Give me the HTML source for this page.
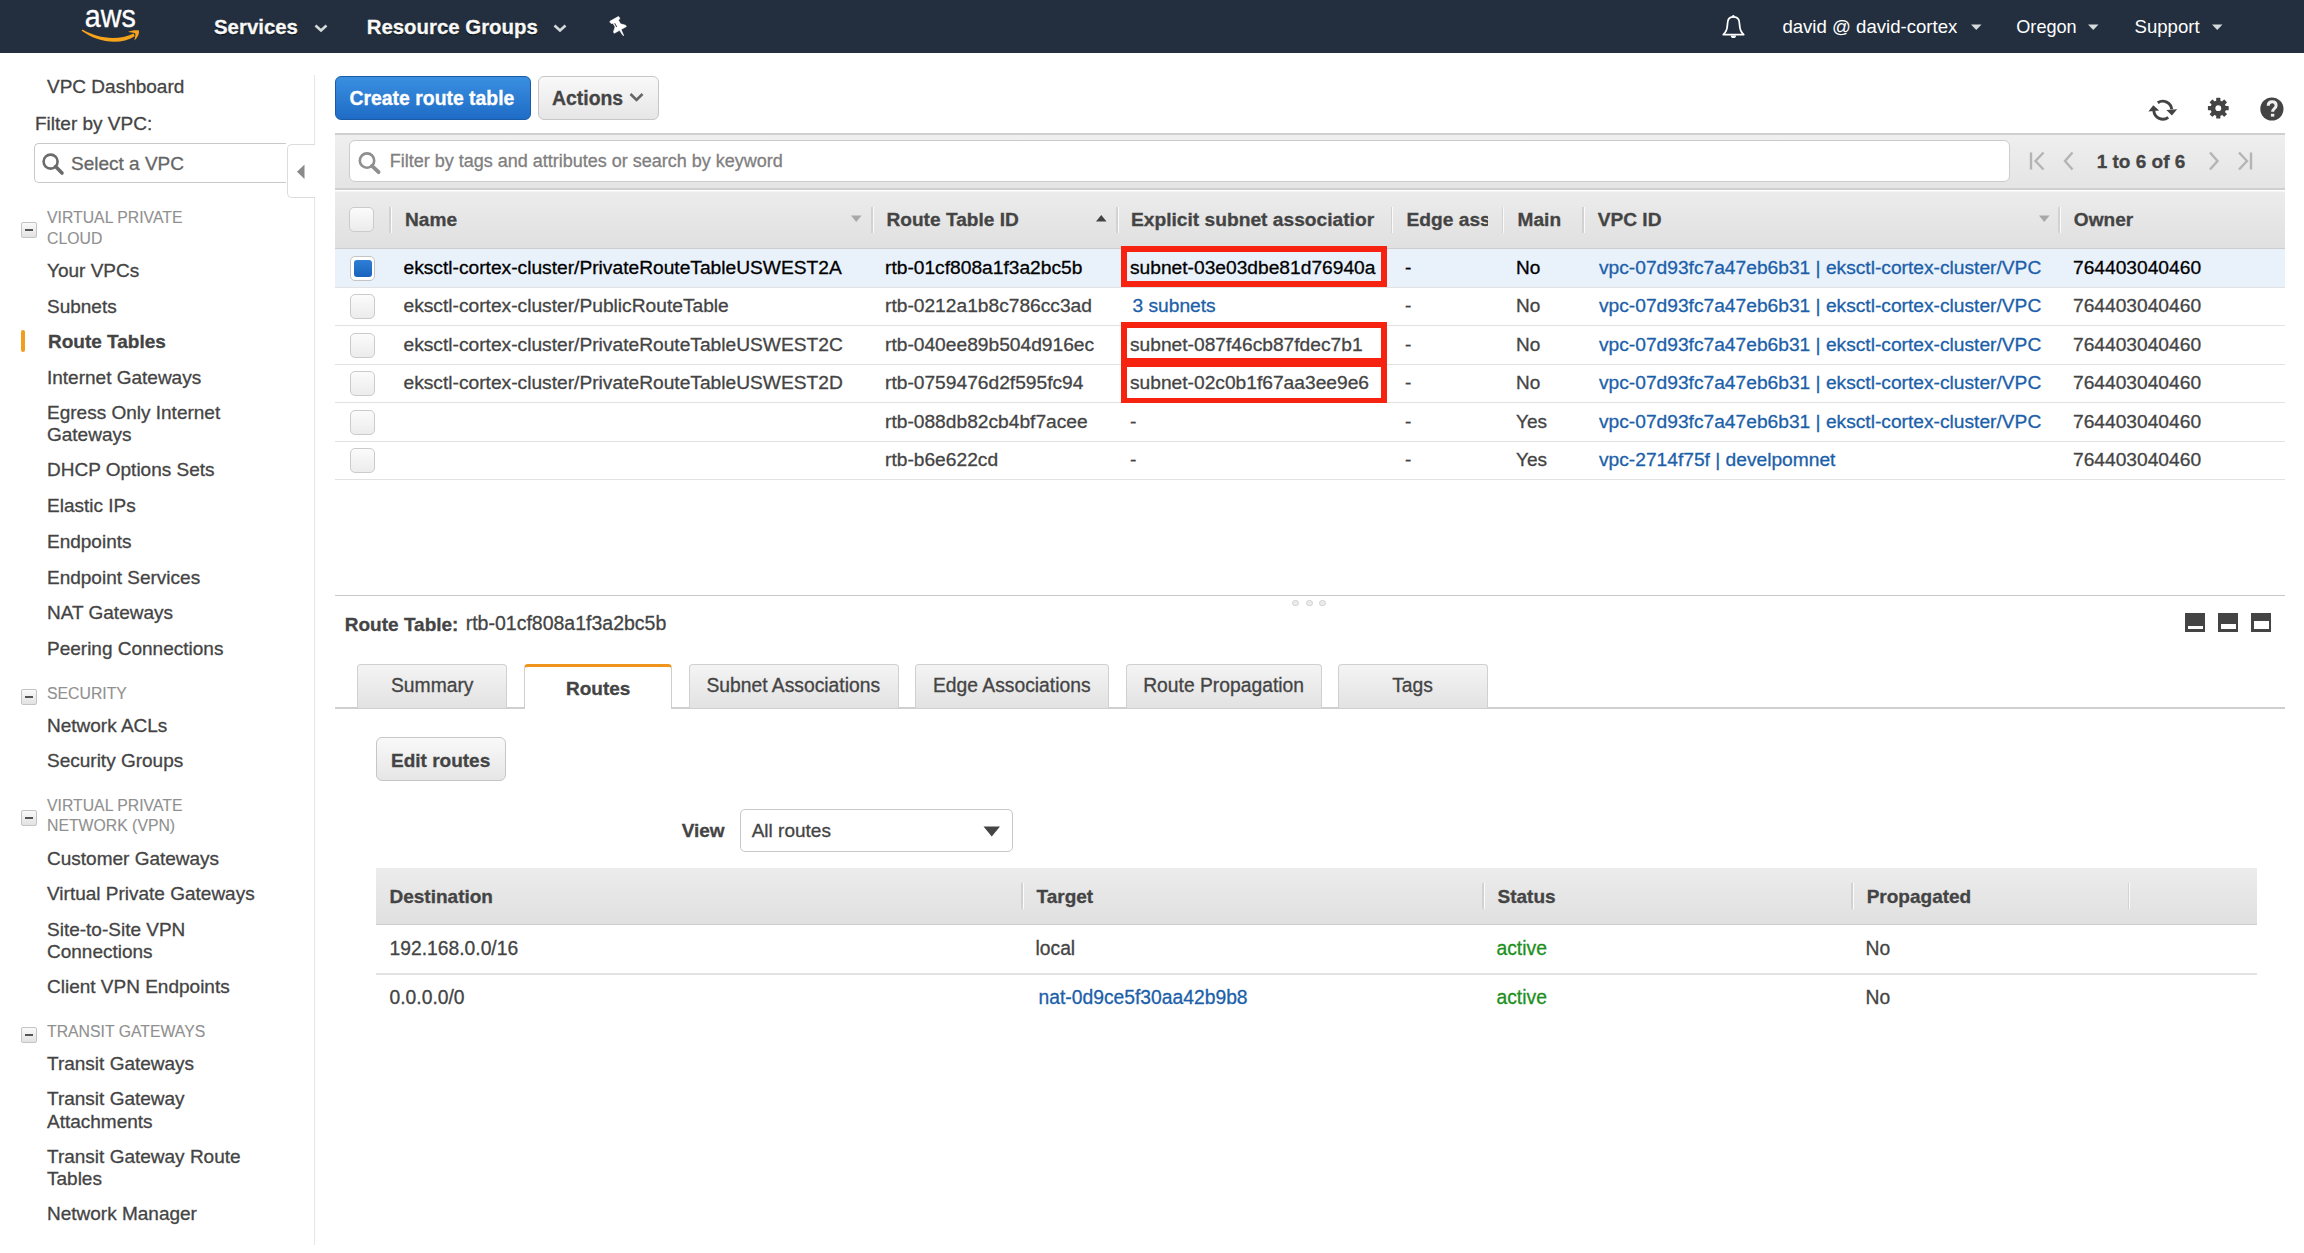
<!DOCTYPE html>
<html><head><meta charset="utf-8"><title>Route Tables | VPC Management Console</title>
<style>
html,body{margin:0;padding:0;}
body{width:2304px;height:1253px;overflow:hidden;position:relative;background:#fff;font-family:'Liberation Sans', sans-serif;}
.a{position:absolute;}
.t{position:absolute;white-space:nowrap;-webkit-text-stroke:0.3px currentColor;}
</style></head><body>
<div class="a" style="left:0px;top:0px;width:2304px;height:53px;background:#232f3e;"></div>
<svg class="a" style="left:75px;top:0px" width="75" height="53" viewBox="75 0 75 53">
<text x="84.8" y="26.6" font-family="Liberation Sans" font-size="31" fill="#fff" stroke="#fff" stroke-width="0.35" textLength="51" lengthAdjust="spacingAndGlyphs">aws</text>
<path d="M81.6,30.8 C96,41.5 119,46.5 134.8,36.2 L133.6,33.4 C118,41 98,38.8 82.6,29.6 Z" fill="#f7a21b"/>
<path d="M128,31.8 C132,30.2 136.2,29.8 139,30.6 C139.4,34 137.6,38 134.4,40.6 C135,37.5 135.6,35.4 135.3,33.4 C133,32.6 130.5,32.4 128,31.8 Z" fill="#f7a21b"/>
</svg>
<div class="t" style="left:214px;top:17.23px;font-size:20.4px;line-height:20.4px;font-weight:bold;color:#f8f8f8;text-shadow:0 1px 1px #000;">Services</div>
<svg class="a" style="left:313.5px;top:22.8px" width="14" height="10" viewBox="0 0 14 10"><path d="M1.5,2.5 L7,7.5 L12.5,2.5" stroke="#d5dbdb" stroke-width="2.6" fill="none"/></svg>
<div class="t" style="left:366.7px;top:17.23px;font-size:20.4px;line-height:20.4px;font-weight:bold;color:#f8f8f8;text-shadow:0 1px 1px #000;">Resource Groups</div>
<svg class="a" style="left:552.5px;top:22.8px" width="14" height="10" viewBox="0 0 14 10"><path d="M1.5,2.5 L7,7.5 L12.5,2.5" stroke="#d5dbdb" stroke-width="2.6" fill="none"/></svg>
<svg class="a" style="left:604px;top:12px" width="28" height="28" viewBox="-14 -14 28 28">
<g transform="translate(2,3.4) rotate(-29)">
<path d="M-4.9,-12 L4.9,-12 Q5.6,-10.6 4.9,-9.4 L3.1,-8.8 L3.1,-4.6 L6.9,-0.9 L6.9,0.6 L0.9,0.6 L0.25,7 L-0.25,7 L-0.9,0.6 L-6.9,0.6 L-6.9,-0.9 L-3.1,-4.6 L-3.1,-8.8 L-4.9,-9.4 Q-5.6,-10.6 -4.9,-12 Z" fill="#fff" stroke="#fff" stroke-width="0.6" stroke-linejoin="round"/>
<path d="M-1.7,-8 L-1.7,-3.6" stroke="#3a3f48" stroke-width="0.9"/>
</g></svg>
<svg class="a" style="left:1715px;top:11.4px" width="40" height="32" viewBox="0 0 40 32">
<path d="M18.3,5.8 C13,5.8 12.6,10 12.4,14 C12.2,19 11.3,21 8.3,23.6 L28.7,23.6 C25.7,21 24.8,19 24.6,14 C24.4,10 24,5.8 18.3,5.8 Z" fill="none" stroke="#fff" stroke-width="1.8" stroke-linejoin="round"/>
<path d="M15.8,24.5 A2.6,2.6 0 0 0 21,24.5 Z" fill="#fff"/>
<circle cx="18.3" cy="5.3" r="1.2" fill="#fff"/>
</svg>
<div class="t" style="left:1782.4px;top:17.86px;font-size:18.6px;line-height:18.6px;font-weight:normal;color:#fff;-webkit-text-stroke:0;">david @ david-cortex</div>
<svg class="a" style="left:1970.5px;top:24px" width="11" height="7" viewBox="0 0 11 7"><path d="M0,0.5 L10.5,0.5 L5.25,6 Z" fill="#d5dbdb"/></svg>
<div class="t" style="left:2016.3px;top:18.28px;font-size:18.1px;line-height:18.1px;font-weight:normal;color:#fff;-webkit-text-stroke:0;">Oregon</div>
<svg class="a" style="left:2088px;top:24px" width="11" height="7" viewBox="0 0 11 7"><path d="M0,0.5 L10.5,0.5 L5.25,6 Z" fill="#d5dbdb"/></svg>
<div class="t" style="left:2134.5px;top:17.86px;font-size:18.6px;line-height:18.6px;font-weight:normal;color:#fff;-webkit-text-stroke:0;">Support</div>
<svg class="a" style="left:2211.5px;top:24px" width="11" height="7" viewBox="0 0 11 7"><path d="M0,0.5 L10.5,0.5 L5.25,6 Z" fill="#d5dbdb"/></svg>
<div class="a" style="left:314px;top:75px;width:1px;height:1170px;background:#e6e6e6;"></div>
<div class="t" style="left:47px;top:76.92px;font-size:19px;line-height:19px;font-weight:normal;color:#444;">VPC Dashboard</div>
<div class="t" style="left:35px;top:113.92px;font-size:19px;line-height:19px;font-weight:normal;color:#444;">Filter by VPC:</div>
<div class="a" style="left:34px;top:143px;width:252px;height:40px;box-sizing:border-box;border:1px solid #c8c8c8;border-right:none;border-radius:5px 0 0 5px;background:#fff;"></div>
<svg class="a" style="left:40px;top:151px" width="26" height="26" viewBox="0 0 26 26"><circle cx="10.6" cy="10.6" r="7" fill="none" stroke="#6b6b6b" stroke-width="2.6"/><path d="M15.6,15.6 L22,22" stroke="#6b6b6b" stroke-width="3.6" stroke-linecap="round"/></svg>
<div class="t" style="left:71px;top:153.92px;font-size:19px;line-height:19px;font-weight:normal;color:#666;">Select a VPC</div>
<div class="a" style="left:287px;top:144px;width:28px;height:54px;box-sizing:border-box;border:1px solid #dcdcdc;border-right:none;border-radius:5px 0 0 5px;background:#fff;"></div>
<svg class="a" style="left:296px;top:164px" width="10" height="16" viewBox="0 0 10 16"><path d="M8.5,0.5 L8.5,15 L1,7.75 Z" fill="#8a8a8a"/></svg>
<div class="t" style="left:47px;top:209.63px;font-size:15.8px;line-height:15.8px;font-weight:normal;color:#909090;-webkit-text-stroke:0.12px currentColor;">VIRTUAL PRIVATE</div>
<div class="t" style="left:47px;top:230.93px;font-size:15.8px;line-height:15.8px;font-weight:normal;color:#909090;-webkit-text-stroke:0.12px currentColor;">CLOUD</div>
<div class="a" style="left:21px;top:222px;width:16px;height:16px;box-sizing:border-box;border:1px solid #c4c4c4;border-radius:2px;background:linear-gradient(#fafafa,#e2e2e2);"></div>
<div class="a" style="left:25px;top:229px;width:8px;height:2.2px;background:#555;"></div>
<div class="t" style="left:47px;top:261.42px;font-size:19px;line-height:19px;font-weight:normal;color:#444;">Your VPCs</div>
<div class="t" style="left:47px;top:296.92px;font-size:19px;line-height:19px;font-weight:normal;color:#444;">Subnets</div>
<div class="t" style="left:47px;top:367.82px;font-size:19px;line-height:19px;font-weight:normal;color:#444;">Internet Gateways</div>
<div class="t" style="left:47px;top:403.22px;font-size:19px;line-height:19px;font-weight:normal;color:#444;">Egress Only Internet</div>
<div class="t" style="left:47px;top:424.72px;font-size:19px;line-height:19px;font-weight:normal;color:#444;">Gateways</div>
<div class="t" style="left:47px;top:460.42px;font-size:19px;line-height:19px;font-weight:normal;color:#444;">DHCP Options Sets</div>
<div class="t" style="left:47px;top:496.12px;font-size:19px;line-height:19px;font-weight:normal;color:#444;">Elastic IPs</div>
<div class="t" style="left:47px;top:531.92px;font-size:19px;line-height:19px;font-weight:normal;color:#444;">Endpoints</div>
<div class="t" style="left:47px;top:567.52px;font-size:19px;line-height:19px;font-weight:normal;color:#444;">Endpoint Services</div>
<div class="t" style="left:47px;top:603.12px;font-size:19px;line-height:19px;font-weight:normal;color:#444;">NAT Gateways</div>
<div class="t" style="left:47px;top:638.52px;font-size:19px;line-height:19px;font-weight:normal;color:#444;">Peering Connections</div>
<div class="t" style="left:47px;top:715.82px;font-size:19px;line-height:19px;font-weight:normal;color:#444;">Network ACLs</div>
<div class="t" style="left:47px;top:751.32px;font-size:19px;line-height:19px;font-weight:normal;color:#444;">Security Groups</div>
<div class="t" style="left:47px;top:848.82px;font-size:19px;line-height:19px;font-weight:normal;color:#444;">Customer Gateways</div>
<div class="t" style="left:47px;top:884.32px;font-size:19px;line-height:19px;font-weight:normal;color:#444;">Virtual Private Gateways</div>
<div class="t" style="left:47px;top:919.92px;font-size:19px;line-height:19px;font-weight:normal;color:#444;">Site-to-Site VPN</div>
<div class="t" style="left:47px;top:941.52px;font-size:19px;line-height:19px;font-weight:normal;color:#444;">Connections</div>
<div class="t" style="left:47px;top:977.32px;font-size:19px;line-height:19px;font-weight:normal;color:#444;">Client VPN Endpoints</div>
<div class="t" style="left:47px;top:1053.62px;font-size:19px;line-height:19px;font-weight:normal;color:#444;">Transit Gateways</div>
<div class="t" style="left:47px;top:1088.92px;font-size:19px;line-height:19px;font-weight:normal;color:#444;">Transit Gateway</div>
<div class="t" style="left:47px;top:1111.52px;font-size:19px;line-height:19px;font-weight:normal;color:#444;">Attachments</div>
<div class="t" style="left:47px;top:1147.02px;font-size:19px;line-height:19px;font-weight:normal;color:#444;">Transit Gateway Route</div>
<div class="t" style="left:47px;top:1168.62px;font-size:19px;line-height:19px;font-weight:normal;color:#444;">Tables</div>
<div class="t" style="left:47px;top:1204.42px;font-size:19px;line-height:19px;font-weight:normal;color:#444;">Network Manager</div>
<div class="t" style="left:48px;top:332.42px;font-size:19px;line-height:19px;font-weight:bold;color:#444;">Route Tables</div>
<div class="a" style="left:21px;top:330px;width:4px;height:22px;background:#f19e1f;border-radius:2px;"></div>
<div class="t" style="left:47px;top:685.63px;font-size:15.8px;line-height:15.8px;font-weight:normal;color:#909090;-webkit-text-stroke:0.12px currentColor;">SECURITY</div>
<div class="a" style="left:21px;top:688.5px;width:16px;height:16px;box-sizing:border-box;border:1px solid #c4c4c4;border-radius:2px;background:linear-gradient(#fafafa,#e2e2e2);"></div>
<div class="a" style="left:25px;top:695.5px;width:8px;height:2.2px;background:#555;"></div>
<div class="t" style="left:47px;top:798.33px;font-size:15.8px;line-height:15.8px;font-weight:normal;color:#909090;-webkit-text-stroke:0.12px currentColor;">VIRTUAL PRIVATE</div>
<div class="t" style="left:47px;top:817.83px;font-size:15.8px;line-height:15.8px;font-weight:normal;color:#909090;-webkit-text-stroke:0.12px currentColor;">NETWORK (VPN)</div>
<div class="a" style="left:21px;top:810px;width:16px;height:16px;box-sizing:border-box;border:1px solid #c4c4c4;border-radius:2px;background:linear-gradient(#fafafa,#e2e2e2);"></div>
<div class="a" style="left:25px;top:817px;width:8px;height:2.2px;background:#555;"></div>
<div class="t" style="left:47px;top:1024.03px;font-size:15.8px;line-height:15.8px;font-weight:normal;color:#909090;-webkit-text-stroke:0.12px currentColor;">TRANSIT GATEWAYS</div>
<div class="a" style="left:21px;top:1027px;width:16px;height:16px;box-sizing:border-box;border:1px solid #c4c4c4;border-radius:2px;background:linear-gradient(#fafafa,#e2e2e2);"></div>
<div class="a" style="left:25px;top:1034px;width:8px;height:2.2px;background:#555;"></div>
<div class="a" style="left:335px;top:76px;width:196px;height:44px;box-sizing:border-box;border:1px solid #1a5ba6;border-radius:6px;background:linear-gradient(#3a8fe0,#1f6cc6);"></div>
<div class="t" style="left:349.5px;top:89.08px;font-size:19.4px;line-height:19.4px;font-weight:bold;color:#fff;">Create route table</div>
<div class="a" style="left:538px;top:76px;width:121px;height:44px;box-sizing:border-box;border:1px solid #c6c6c6;border-radius:6px;background:linear-gradient(#f9f9f9,#e6e6e6);"></div>
<div class="t" style="left:552px;top:89.08px;font-size:19.4px;line-height:19.4px;font-weight:bold;color:#444;">Actions</div>
<svg class="a" style="left:629px;top:92px" width="15" height="11" viewBox="0 0 15 11"><path d="M1.5,2 L7.5,8 L13.5,2" stroke="#666" stroke-width="2.6" fill="none"/></svg>
<svg class="a" style="left:2140px;top:90px" width="40" height="40" viewBox="0 0 40 40">
<path d="M17.77,12.74 A9,9 0 0 1 31.77,19.4" fill="none" stroke="#444" stroke-width="2.9"/>
<path d="M26.4,19.9 L37.2,19.3 L31.9,25.6 Z" fill="#444"/>
<path d="M28.22,27.39 A9,9 0 0 1 13.83,20.98" fill="none" stroke="#444" stroke-width="2.9"/>
<path d="M8.4,21.4 L19.2,20.6 L13.3,15.2 Z" fill="#444"/>
</svg>
<svg class="a" style="left:2205px;top:95px" width="26" height="26" viewBox="-13 -13 26 26">
<g fill="#444" transform="translate(0.3,0.2)">
<rect x="-2.1" y="-10.4" width="4.2" height="20.8" rx="0.6"/>
<rect x="-2.1" y="-10.4" width="4.2" height="20.8" rx="0.6" transform="rotate(45)"/>
<rect x="-2.1" y="-10.4" width="4.2" height="20.8" rx="0.6" transform="rotate(90)"/>
<rect x="-2.1" y="-10.4" width="4.2" height="20.8" rx="0.6" transform="rotate(135)"/>
<circle r="7.8"/></g><circle cx="0.3" cy="0.2" r="2.9" fill="#fff"/>
</svg>
<svg class="a" style="left:2259px;top:96px" width="26" height="26" viewBox="0 0 26 26">
<circle cx="12.9" cy="13" r="11.6" fill="#444"/>
<path d="M9.2,9.8 C9.2,7 10.9,5.8 13.1,5.8 C15.5,5.8 17.1,7.2 17.1,9.4 C17.1,12.4 13.6,12.6 13.6,15.8" fill="none" stroke="#f0f0f0" stroke-width="3"/>
<rect x="11.9" y="17.8" width="3.4" height="2.8" fill="#f0f0f0"/>
</svg>
<div class="a" style="left:335px;top:133px;width:1950px;height:57px;box-sizing:border-box;border-top:2px solid #cfcfcf;border-bottom:2px solid #cfcfcf;background:linear-gradient(#efefef,#e4e4e4);"></div>
<div class="a" style="left:349px;top:140px;width:1661px;height:42px;box-sizing:border-box;border:1px solid #cccccc;border-radius:6px;background:#fff;"></div>
<svg class="a" style="left:355px;top:149px" width="28" height="27" viewBox="0 0 28 27"><circle cx="12" cy="11.6" r="7.2" fill="none" stroke="#8f8f8f" stroke-width="2.6"/><path d="M17,16.8 L23.6,23.2" stroke="#8f8f8f" stroke-width="3.8" stroke-linecap="round"/></svg>
<div class="t" style="left:389.7px;top:151.76px;font-size:18px;line-height:18px;font-weight:normal;color:#808080;">Filter by tags and attributes or search by keyword</div>
<svg class="a" style="left:2026px;top:150px" width="232" height="22" viewBox="0 0 232 22">
<path d="M5,2.5 L5,19.5" stroke="#b4b4b4" stroke-width="2.4"/>
<path d="M17.5,2.5 L9.5,11 L17.5,19.5" stroke="#b4b4b4" stroke-width="2.4" fill="none"/>
<path d="M46.5,2.5 L39,11 L46.5,19.5" stroke="#b4b4b4" stroke-width="2.4" fill="none"/>
<path d="M184,2.5 L191.5,11 L184,19.5" stroke="#b4b4b4" stroke-width="2.4" fill="none"/>
<path d="M213,2.5 L221,11 L213,19.5" stroke="#b4b4b4" stroke-width="2.4" fill="none"/>
<path d="M225,2.5 L225,19.5" stroke="#b4b4b4" stroke-width="2.4"/>
</svg>
<div class="t" style="left:2096.7px;top:152.32px;font-size:19px;line-height:19px;font-weight:bold;color:#444;">1 to 6 of 6</div>
<div class="a" style="left:335px;top:191px;width:1950px;height:58px;box-sizing:border-box;border-top:1px solid #f5f5f5;border-bottom:1px solid #cdcdcd;background:linear-gradient(#ececec,#e0e0e0);"></div>
<div class="a" style="left:349px;top:207px;width:25px;height:25px;box-sizing:border-box;border:1px solid #cbcbcb;border-radius:5px;background:linear-gradient(#fbfbfb,#ececec);"></div>
<div class="a" style="left:389px;top:207px;width:1.5px;height:26px;background:#d2d2d2;box-shadow:1px 0 0 #fbfbfb;"></div>
<div class="a" style="left:871px;top:207px;width:1.5px;height:26px;background:#d2d2d2;box-shadow:1px 0 0 #fbfbfb;"></div>
<div class="a" style="left:1116px;top:207px;width:1.5px;height:26px;background:#d2d2d2;box-shadow:1px 0 0 #fbfbfb;"></div>
<div class="a" style="left:1390.5px;top:207px;width:1.5px;height:26px;background:#d2d2d2;box-shadow:1px 0 0 #fbfbfb;"></div>
<div class="a" style="left:1501.5px;top:207px;width:1.5px;height:26px;background:#d2d2d2;box-shadow:1px 0 0 #fbfbfb;"></div>
<div class="a" style="left:1582px;top:207px;width:1.5px;height:26px;background:#d2d2d2;box-shadow:1px 0 0 #fbfbfb;"></div>
<div class="a" style="left:2058px;top:207px;width:1.5px;height:26px;background:#d2d2d2;box-shadow:1px 0 0 #fbfbfb;"></div>
<div class="t" style="left:405px;top:210.23px;font-size:19.1px;line-height:19.1px;font-weight:bold;color:#444;">Name</div>
<div class="t" style="left:886.5px;top:210.23px;font-size:19.1px;line-height:19.1px;font-weight:bold;color:#444;">Route Table ID</div>
<div class="a" style="left:1131px;top:200px;width:246px;height:40px;overflow:hidden;"><div class="t" style="left:0px;top:10.15px;font-size:19.2px;line-height:19.2px;font-weight:bold;color:#444;">Explicit subnet associatior</div>
</div>
<div class="a" style="left:1406.5px;top:200px;width:81.5px;height:40px;overflow:hidden;"><div class="t" style="left:0px;top:10.15px;font-size:19.2px;line-height:19.2px;font-weight:bold;color:#444;">Edge ass</div>
</div>
<div class="t" style="left:1517.6px;top:210.23px;font-size:19.1px;line-height:19.1px;font-weight:bold;color:#444;">Main</div>
<div class="t" style="left:1597.8px;top:210.23px;font-size:19.1px;line-height:19.1px;font-weight:bold;color:#444;">VPC ID</div>
<div class="t" style="left:2073.8px;top:210.23px;font-size:19.1px;line-height:19.1px;font-weight:bold;color:#444;">Owner</div>
<svg class="a" style="left:851px;top:215px" width="11" height="8" viewBox="0 0 11 8"><path d="M0,0.5 L10.5,0.5 L5.25,7 Z" fill="#a8a8a8"/></svg>
<svg class="a" style="left:2038.5px;top:215px" width="11" height="8" viewBox="0 0 11 8"><path d="M0,0.5 L10.5,0.5 L5.25,7 Z" fill="#a8a8a8"/></svg>
<svg class="a" style="left:1096px;top:214px" width="11" height="8" viewBox="0 0 11 8"><path d="M0,7.5 L10.5,7.5 L5.25,1 Z" fill="#444"/></svg>
<div class="a" style="left:335px;top:249.0px;width:1950px;height:38.5px;box-sizing:border-box;border-bottom:1.5px solid #e2e2e2;background:#e9f1fb;"></div>
<div class="a" style="left:350px;top:255.5px;width:25px;height:25px;box-sizing:border-box;border:1px solid #c4c4c4;border-radius:5px;background:#fff;"></div>
<div class="a" style="left:354px;top:259.5px;width:17.5px;height:17.5px;border-radius:3px;background:linear-gradient(#2f7fd6,#1863bd);"></div>
<div class="t" style="left:403.5px;top:257.75px;font-size:19.2px;line-height:19.2px;font-weight:normal;color:#000;">eksctl-cortex-cluster/PrivateRouteTableUSWEST2A</div>
<div class="t" style="left:885px;top:257.75px;font-size:19.2px;line-height:19.2px;font-weight:normal;color:#000;">rtb-01cf808a1f3a2bc5b</div>
<div class="t" style="left:1130px;top:257.75px;font-size:19.2px;line-height:19.2px;font-weight:normal;color:#000;">subnet-03e03dbe81d76940a</div>
<div class="t" style="left:1405px;top:257.92px;font-size:19px;line-height:19px;font-weight:normal;color:#000;">-</div>
<div class="t" style="left:1516px;top:257.92px;font-size:19px;line-height:19px;font-weight:normal;color:#000;">No</div>
<div class="t" style="left:1599px;top:257.75px;font-size:19.2px;line-height:19.2px;font-weight:normal;color:#1c5fa9;">vpc-07d93fc7a47eb6b31 | eksctl-cortex-cluster/VPC</div>
<div class="t" style="left:2073px;top:257.75px;font-size:19.2px;line-height:19.2px;font-weight:normal;color:#000;">764403040460</div>
<div class="a" style="left:335px;top:287.5px;width:1950px;height:38.5px;box-sizing:border-box;border-bottom:1.5px solid #e2e2e2;background:#fff;"></div>
<div class="a" style="left:350px;top:294.0px;width:25px;height:25px;box-sizing:border-box;border:1px solid #cbcbcb;border-radius:5px;background:linear-gradient(#fbfbfb,#ececec);"></div>
<div class="t" style="left:403.5px;top:296.25px;font-size:19.2px;line-height:19.2px;font-weight:normal;color:#444;">eksctl-cortex-cluster/PublicRouteTable</div>
<div class="t" style="left:885px;top:296.25px;font-size:19.2px;line-height:19.2px;font-weight:normal;color:#444;">rtb-0212a1b8c786cc3ad</div>
<div class="t" style="left:1132.5px;top:296.25px;font-size:19.2px;line-height:19.2px;font-weight:normal;color:#1c5fa9;">3 subnets</div>
<div class="t" style="left:1405px;top:296.42px;font-size:19px;line-height:19px;font-weight:normal;color:#444;">-</div>
<div class="t" style="left:1516px;top:296.42px;font-size:19px;line-height:19px;font-weight:normal;color:#444;">No</div>
<div class="t" style="left:1599px;top:296.25px;font-size:19.2px;line-height:19.2px;font-weight:normal;color:#1c5fa9;">vpc-07d93fc7a47eb6b31 | eksctl-cortex-cluster/VPC</div>
<div class="t" style="left:2073px;top:296.25px;font-size:19.2px;line-height:19.2px;font-weight:normal;color:#444;">764403040460</div>
<div class="a" style="left:335px;top:326.0px;width:1950px;height:38.5px;box-sizing:border-box;border-bottom:1.5px solid #e2e2e2;background:#fff;"></div>
<div class="a" style="left:350px;top:332.5px;width:25px;height:25px;box-sizing:border-box;border:1px solid #cbcbcb;border-radius:5px;background:linear-gradient(#fbfbfb,#ececec);"></div>
<div class="t" style="left:403.5px;top:334.75px;font-size:19.2px;line-height:19.2px;font-weight:normal;color:#444;">eksctl-cortex-cluster/PrivateRouteTableUSWEST2C</div>
<div class="t" style="left:885px;top:334.75px;font-size:19.2px;line-height:19.2px;font-weight:normal;color:#444;">rtb-040ee89b504d916ec</div>
<div class="t" style="left:1130px;top:334.75px;font-size:19.2px;line-height:19.2px;font-weight:normal;color:#444;">subnet-087f46cb87fdec7b1</div>
<div class="t" style="left:1405px;top:334.92px;font-size:19px;line-height:19px;font-weight:normal;color:#444;">-</div>
<div class="t" style="left:1516px;top:334.92px;font-size:19px;line-height:19px;font-weight:normal;color:#444;">No</div>
<div class="t" style="left:1599px;top:334.75px;font-size:19.2px;line-height:19.2px;font-weight:normal;color:#1c5fa9;">vpc-07d93fc7a47eb6b31 | eksctl-cortex-cluster/VPC</div>
<div class="t" style="left:2073px;top:334.75px;font-size:19.2px;line-height:19.2px;font-weight:normal;color:#444;">764403040460</div>
<div class="a" style="left:335px;top:364.5px;width:1950px;height:38.5px;box-sizing:border-box;border-bottom:1.5px solid #e2e2e2;background:#fff;"></div>
<div class="a" style="left:350px;top:371.0px;width:25px;height:25px;box-sizing:border-box;border:1px solid #cbcbcb;border-radius:5px;background:linear-gradient(#fbfbfb,#ececec);"></div>
<div class="t" style="left:403.5px;top:373.25px;font-size:19.2px;line-height:19.2px;font-weight:normal;color:#444;">eksctl-cortex-cluster/PrivateRouteTableUSWEST2D</div>
<div class="t" style="left:885px;top:373.25px;font-size:19.2px;line-height:19.2px;font-weight:normal;color:#444;">rtb-0759476d2f595fc94</div>
<div class="t" style="left:1130px;top:373.25px;font-size:19.2px;line-height:19.2px;font-weight:normal;color:#444;">subnet-02c0b1f67aa3ee9e6</div>
<div class="t" style="left:1405px;top:373.42px;font-size:19px;line-height:19px;font-weight:normal;color:#444;">-</div>
<div class="t" style="left:1516px;top:373.42px;font-size:19px;line-height:19px;font-weight:normal;color:#444;">No</div>
<div class="t" style="left:1599px;top:373.25px;font-size:19.2px;line-height:19.2px;font-weight:normal;color:#1c5fa9;">vpc-07d93fc7a47eb6b31 | eksctl-cortex-cluster/VPC</div>
<div class="t" style="left:2073px;top:373.25px;font-size:19.2px;line-height:19.2px;font-weight:normal;color:#444;">764403040460</div>
<div class="a" style="left:335px;top:403.0px;width:1950px;height:38.5px;box-sizing:border-box;border-bottom:1.5px solid #e2e2e2;background:#fff;"></div>
<div class="a" style="left:350px;top:409.5px;width:25px;height:25px;box-sizing:border-box;border:1px solid #cbcbcb;border-radius:5px;background:linear-gradient(#fbfbfb,#ececec);"></div>
<div class="t" style="left:885px;top:411.75px;font-size:19.2px;line-height:19.2px;font-weight:normal;color:#444;">rtb-088db82cb4bf7acee</div>
<div class="t" style="left:1130px;top:411.75px;font-size:19.2px;line-height:19.2px;font-weight:normal;color:#444;">-</div>
<div class="t" style="left:1405px;top:411.92px;font-size:19px;line-height:19px;font-weight:normal;color:#444;">-</div>
<div class="t" style="left:1516px;top:411.92px;font-size:19px;line-height:19px;font-weight:normal;color:#444;">Yes</div>
<div class="t" style="left:1599px;top:411.75px;font-size:19.2px;line-height:19.2px;font-weight:normal;color:#1c5fa9;">vpc-07d93fc7a47eb6b31 | eksctl-cortex-cluster/VPC</div>
<div class="t" style="left:2073px;top:411.75px;font-size:19.2px;line-height:19.2px;font-weight:normal;color:#444;">764403040460</div>
<div class="a" style="left:335px;top:441.5px;width:1950px;height:38.5px;box-sizing:border-box;border-bottom:1.5px solid #e2e2e2;background:#fff;"></div>
<div class="a" style="left:350px;top:448.0px;width:25px;height:25px;box-sizing:border-box;border:1px solid #cbcbcb;border-radius:5px;background:linear-gradient(#fbfbfb,#ececec);"></div>
<div class="t" style="left:885px;top:450.25px;font-size:19.2px;line-height:19.2px;font-weight:normal;color:#444;">rtb-b6e622cd</div>
<div class="t" style="left:1130px;top:450.25px;font-size:19.2px;line-height:19.2px;font-weight:normal;color:#444;">-</div>
<div class="t" style="left:1405px;top:450.42px;font-size:19px;line-height:19px;font-weight:normal;color:#444;">-</div>
<div class="t" style="left:1516px;top:450.42px;font-size:19px;line-height:19px;font-weight:normal;color:#444;">Yes</div>
<div class="t" style="left:1599px;top:450.25px;font-size:19.2px;line-height:19.2px;font-weight:normal;color:#1c5fa9;">vpc-2714f75f | develpomnet</div>
<div class="t" style="left:2073px;top:450.25px;font-size:19.2px;line-height:19.2px;font-weight:normal;color:#444;">764403040460</div>
<div class="a" style="left:1121px;top:245.5px;width:266px;height:41.5px;box-sizing:border-box;border:6.5px solid #f5230f;border-right-width:6px;border-bottom-width:6px;"></div>
<div class="a" style="left:1121px;top:322px;width:266px;height:40.5px;box-sizing:border-box;border:6px solid #f5230f;border-left-width:6.5px;border-bottom-width:5.5px;"></div>
<div class="a" style="left:1121px;top:362px;width:266px;height:41px;box-sizing:border-box;border:5.5px solid #f5230f;border-left-width:6.5px;border-right-width:6px;"></div>
<div class="a" style="left:335px;top:594.5px;width:1950px;height:1.5px;background:#c8c8c8;"></div>
<div class="a" style="left:1292px;top:600px;width:7px;height:6px;box-sizing:border-box;border:1.5px solid #d2d2d2;border-radius:3.5px 3.5px 3px 3px;background:#ececec;"></div>
<div class="a" style="left:1305.5px;top:600px;width:7px;height:6px;box-sizing:border-box;border:1.5px solid #d2d2d2;border-radius:3.5px 3.5px 3px 3px;background:#ececec;"></div>
<div class="a" style="left:1319px;top:600px;width:7px;height:6px;box-sizing:border-box;border:1.5px solid #d2d2d2;border-radius:3.5px 3.5px 3px 3px;background:#ececec;"></div>
<div class="t" style="left:344.8px;top:614.52px;font-size:19px;line-height:19px;font-weight:bold;color:#444;">Route Table:</div>
<div class="t" style="left:465.7px;top:614.09px;font-size:19.5px;line-height:19.5px;font-weight:normal;color:#444;">rtb-01cf808a1f3a2bc5b</div>
<div class="a" style="left:2185px;top:613px;width:20px;height:19px;background:#444;"></div>
<div class="a" style="left:2187.5px;top:626.2px;width:15px;height:3px;background:#fff;"></div>
<div class="a" style="left:2218px;top:613px;width:20px;height:19px;background:#444;"></div>
<div class="a" style="left:2220.5px;top:623.7px;width:15px;height:5.5px;background:#fff;"></div>
<div class="a" style="left:2251px;top:613px;width:20px;height:19px;background:#444;"></div>
<div class="a" style="left:2253.5px;top:620.7px;width:15px;height:8.5px;background:#fff;"></div>
<div class="a" style="left:335px;top:707px;width:1950px;height:1.5px;background:#cfcfcf;"></div>
<div class="a" style="left:357px;top:663.5px;width:150px;height:44.5px;box-sizing:border-box;border:1.5px solid #d0d0d0;border-bottom:none;border-radius:4px 4px 0 0;background:linear-gradient(#f4f4f4,#e2e2e2);"></div>
<div class="t" style="left:391px;top:676.06px;font-size:19.3px;line-height:19.3px;font-weight:normal;color:#444;">Summary</div>
<div class="a" style="left:523.5px;top:663.5px;width:148.5px;height:45.5px;box-sizing:border-box;border:1px solid #cfcfcf;border-bottom:none;border-top:3px solid #f0951c;border-radius:4px 4px 0 0;background:#fff;"></div>
<div class="t" style="left:566px;top:678.72px;font-size:19px;line-height:19px;font-weight:bold;color:#444;">Routes</div>
<div class="a" style="left:689px;top:663.5px;width:210px;height:44.5px;box-sizing:border-box;border:1.5px solid #d0d0d0;border-bottom:none;border-radius:4px 4px 0 0;background:linear-gradient(#f4f4f4,#e2e2e2);"></div>
<div class="t" style="left:706.4px;top:676.06px;font-size:19.3px;line-height:19.3px;font-weight:normal;color:#444;">Subnet Associations</div>
<div class="a" style="left:915px;top:663.5px;width:194px;height:44.5px;box-sizing:border-box;border:1.5px solid #d0d0d0;border-bottom:none;border-radius:4px 4px 0 0;background:linear-gradient(#f4f4f4,#e2e2e2);"></div>
<div class="t" style="left:933px;top:676.06px;font-size:19.3px;line-height:19.3px;font-weight:normal;color:#444;">Edge Associations</div>
<div class="a" style="left:1125.5px;top:663.5px;width:196.5px;height:44.5px;box-sizing:border-box;border:1.5px solid #d0d0d0;border-bottom:none;border-radius:4px 4px 0 0;background:linear-gradient(#f4f4f4,#e2e2e2);"></div>
<div class="t" style="left:1143.2px;top:676.06px;font-size:19.3px;line-height:19.3px;font-weight:normal;color:#444;">Route Propagation</div>
<div class="a" style="left:1337.5px;top:663.5px;width:150.0px;height:44.5px;box-sizing:border-box;border:1.5px solid #d0d0d0;border-bottom:none;border-radius:4px 4px 0 0;background:linear-gradient(#f4f4f4,#e2e2e2);"></div>
<div class="t" style="left:1392.2px;top:676.06px;font-size:19.3px;line-height:19.3px;font-weight:normal;color:#444;">Tags</div>
<div class="a" style="left:376px;top:737px;width:130px;height:44px;box-sizing:border-box;border:1px solid #c6c6c6;border-radius:6px;background:linear-gradient(#f9f9f9,#e6e6e6);"></div>
<div class="t" style="left:391px;top:750.52px;font-size:19px;line-height:19px;font-weight:bold;color:#444;">Edit routes</div>
<div class="t" style="left:681.7px;top:821.42px;font-size:19px;line-height:19px;font-weight:bold;color:#444;">View</div>
<div class="a" style="left:740px;top:809px;width:273px;height:43px;box-sizing:border-box;border:1.5px solid #c8c8c8;border-radius:5px;background:#fff;"></div>
<div class="t" style="left:751.7px;top:821.42px;font-size:19px;line-height:19px;font-weight:normal;color:#444;">All routes</div>
<svg class="a" style="left:983px;top:826px" width="18" height="12" viewBox="0 0 18 12"><path d="M0.5,0.5 L17,0.5 L8.75,10.5 Z" fill="#444"/></svg>
<div class="a" style="left:376px;top:868px;width:1881px;height:57px;box-sizing:border-box;border-bottom:1.5px solid #cdcdcd;background:linear-gradient(#ececec,#e0e0e0);"></div>
<div class="a" style="left:1021px;top:883px;width:1.5px;height:26px;background:#d2d2d2;box-shadow:1px 0 0 #fbfbfb;"></div>
<div class="a" style="left:1482px;top:883px;width:1.5px;height:26px;background:#d2d2d2;box-shadow:1px 0 0 #fbfbfb;"></div>
<div class="a" style="left:1851px;top:883px;width:1.5px;height:26px;background:#d2d2d2;box-shadow:1px 0 0 #fbfbfb;"></div>
<div class="a" style="left:2127.5px;top:883px;width:1.5px;height:26px;background:#d2d2d2;box-shadow:1px 0 0 #fbfbfb;"></div>
<div class="t" style="left:389.5px;top:886.92px;font-size:19px;line-height:19px;font-weight:bold;color:#444;">Destination</div>
<div class="t" style="left:1036.5px;top:886.92px;font-size:19px;line-height:19px;font-weight:bold;color:#444;">Target</div>
<div class="t" style="left:1497.5px;top:886.92px;font-size:19px;line-height:19px;font-weight:bold;color:#444;">Status</div>
<div class="t" style="left:1866.7px;top:886.92px;font-size:19px;line-height:19px;font-weight:bold;color:#444;">Propagated</div>
<div class="a" style="left:376px;top:973px;width:1881px;height:1.5px;background:#e2e2e2;"></div>
<div class="t" style="left:389.5px;top:939.26px;font-size:19.3px;line-height:19.3px;font-weight:normal;color:#444;">192.168.0.0/16</div>
<div class="t" style="left:1035.5px;top:939.26px;font-size:19.3px;line-height:19.3px;font-weight:normal;color:#444;">local</div>
<div class="t" style="left:1496.5px;top:939.26px;font-size:19.3px;line-height:19.3px;font-weight:normal;color:#1d8f1d;">active</div>
<div class="t" style="left:1865.6px;top:939.26px;font-size:19.3px;line-height:19.3px;font-weight:normal;color:#444;">No</div>
<div class="t" style="left:389.5px;top:988.06px;font-size:19.3px;line-height:19.3px;font-weight:normal;color:#444;">0.0.0.0/0</div>
<div class="t" style="left:1038.5px;top:988.06px;font-size:19.3px;line-height:19.3px;font-weight:normal;color:#1c5fa9;">nat-0d9ce5f30aa42b9b8</div>
<div class="t" style="left:1496.5px;top:988.06px;font-size:19.3px;line-height:19.3px;font-weight:normal;color:#1d8f1d;">active</div>
<div class="t" style="left:1865.6px;top:988.06px;font-size:19.3px;line-height:19.3px;font-weight:normal;color:#444;">No</div>

</body></html>
